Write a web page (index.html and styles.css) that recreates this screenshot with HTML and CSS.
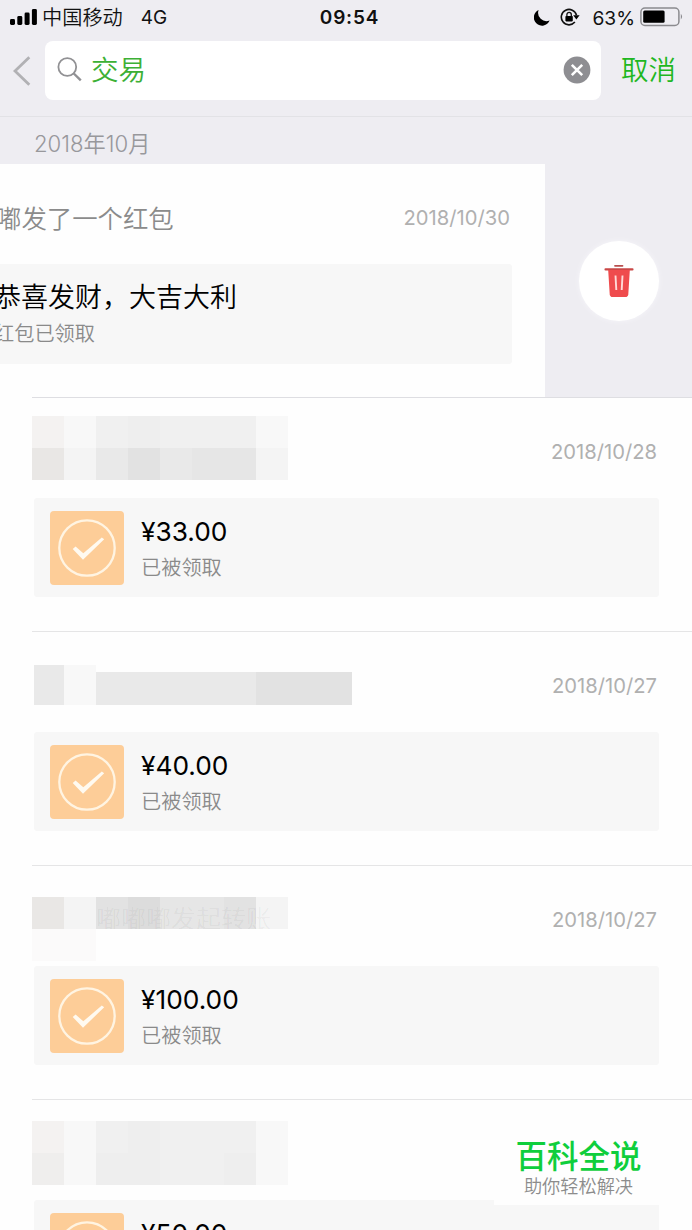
FILE: index.html
```
<!DOCTYPE html>
<html lang="zh-CN">

<head>
    <meta charset="UTF-8">
    <meta name="viewport" content="width=device-width, initial-scale=1.0">
    <title>交易</title>
    <link rel="stylesheet" href="styles.css">
</head>

<body>
    <svg class="defs" width="0" height="0">
        <symbol id="check" viewBox="0 0 74 74">
            <circle cx="37" cy="37" r="27.7" fill="none" stroke="#fff4e2" stroke-width="2.3" />
            <path d="M22.7 38 L25.6 35.5 L33.3 42.3 L51.8 26.5 L54.2 28.2 L33 48.8 Z" fill="#fffaf0" />
        </symbol>
    </svg>

    <div class="phone">
        <header class="top">
            <div class="status-bar">
                <div class="status-left">
                    <svg width="28" height="18" viewBox="0 0 28 18">
                        <rect x="0" y="11" width="5" height="6" rx="1.4" />
                        <rect x="7.3" y="8" width="5" height="9" rx="1.4" />
                        <rect x="14.6" y="4.5" width="5" height="12.5" rx="1.4" />
                        <rect x="21.9" y="1" width="5" height="16" rx="1.4" />
                    </svg>
                    <span class="carrier">中国移动</span>
                    <span class="network">4G</span>
                </div>
                <div class="clock">09:54</div>
                <div class="status-right">
                    <svg width="16" height="17" viewBox="0 0 16 17">
                        <path d="M4.6 1 A8.2 8.2 0 1 0 15.6 11.6 A8.4 8.4 0 0 1 4.6 1 Z" />
                    </svg>
                    <svg class="lock" width="20" height="18" viewBox="0 0 20 18">
                        <path d="M14.9 14.1 A7.7 7.7 0 1 1 16.5 7.3" fill="none" stroke="#111" stroke-width="1.6" />
                        <path d="M13.2 7.3 H19.6 L16.4 11.6 Z" />
                        <rect x="5.4" y="8" width="7.4" height="5.4" rx="0.8" />
                        <path d="M6.9 8.5 V6.6 A2.2 2.2 0 0 1 11.3 6.6 V8.5" fill="none" stroke="#111" stroke-width="1.3" />
                    </svg>
                    <span class="percent">63%</span>
                    <svg width="44" height="20" viewBox="0 0 44 20">
                        <rect x="0.9" y="1" width="38" height="17.4" rx="4" fill="none" stroke="#8b8b8f" stroke-width="1.5" />
                        <rect x="3.2" y="3.6" width="21.4" height="12.2" rx="1.5" />
                        <path d="M40.8 6.8 Q43.4 9.7 40.8 12.6 Z" fill="#8b8b8f" />
                    </svg>
                </div>
            </div>
            <div class="search-bar">
                <svg class="back" width="18" height="30" viewBox="0 0 18 30">
                    <path d="M16.3 1.2 L2 15 L16.3 28.8" fill="none" stroke="#b1b1b4" stroke-width="2.8" />
                </svg>
                <div class="search-box">
                    <svg width="25" height="25" viewBox="0 0 25 25" fill="none" stroke="#919194">
                        <circle cx="10.3" cy="10" r="8.9" stroke-width="1.8" />
                        <path d="M16.8 16.5 L23.8 23.3" stroke-width="2.4" />
                    </svg>
                    <span class="query">交易</span>
                    <svg width="28" height="28" viewBox="0 0 28 28">
                        <circle cx="14" cy="14" r="13.4" fill="#8e8e92" />
                        <path d="M8.8 8.8 L19.2 19.2 M19.2 8.8 L8.8 19.2" stroke="#fff" stroke-width="2.6" />
                    </svg>
                </div>
                <span class="cancel">取消</span>
            </div>
        </header>

        <div class="month">2018年10月</div>

        <div class="swipe-row">
            <div class="swipe-window">
                <div class="item swiped">
                    <div class="item-head">
                        <span class="title">嘟发了一个红包</span>
                        <span class="date">2018/10/30</span>
                    </div>
                    <div class="card">
                        <div class="card-text">
                            <div class="greeting">恭喜发财，大吉大利</div>
                            <div class="state">红包已领取</div>
                        </div>
                    </div>
                </div>
            </div>
            <div class="delete-area">
                <div class="delete-button">
                    <svg width="30" height="34" viewBox="0 0 30 34">
                        <path d="M11 1.8 H18.5" stroke="#b8504f" stroke-width="1.8" stroke-linecap="round" />
                        <path d="M1.5 5.4 H28.5" stroke="#c94847" stroke-width="2.1" stroke-linecap="round" />
                        <path d="M4.2 6 H25.8 L24.3 30.2 Q24.1 33 21.3 33 H8.7 Q5.9 33 5.7 30.2 Z" fill="#ef4b4d" />
                        <path d="M11.5 11.5 L12.3 26 M18.5 11.5 L17.7 26" stroke="#ffd9d7" stroke-width="1.9" />
                    </svg>
                </div>
            </div>
        </div>

        <div class="item">
            <div class="item-head">
                <div class="mosaic m1">
                    <i class="warm"></i><i class="g1"></i><i class="g3"></i><i class="g4"></i><i class="g3"></i><i class="g3"></i><i class="g3"></i><i class="g1"></i>
                    <i class="warm-dark"></i><i class="g2"></i><i class="g5"></i><i class="g7"></i><i class="g5"></i><i class="g6"></i><i class="g6"></i><i class="g2"></i>
                </div>
                <span class="date">2018/10/28</span>
            </div>
            <div class="card">
                <div class="thumb"><svg><use href="#check" /></svg></div>
                <div class="card-text">
                    <div class="amount">¥33.00</div>
                    <div class="state">已被领取</div>
                </div>
            </div>
        </div>

        <div class="item">
            <div class="item-head">
                <div class="mosaic m2">
                    <i class="g5 tall"></i><i class="g1 tall"></i><i class="g5"></i><i class="g5"></i><i class="g5"></i><i class="g5"></i><i class="g5"></i><i class="g7"></i><i class="g7"></i><i class="g7"></i>
                </div>
                <span class="date">2018/10/27</span>
            </div>
            <div class="card">
                <div class="thumb"><svg><use href="#check" /></svg></div>
                <div class="card-text">
                    <div class="amount">¥40.00</div>
                    <div class="state">已被领取</div>
                </div>
            </div>
        </div>

        <div class="item">
            <div class="item-head">
                <div class="mosaic m3">
                    <i class="warm-dark"></i><i class="g2"></i><i class="g7"></i><i class="g8"></i><i class="g6"></i><i class="g6"></i><i class="g7"></i><i class="g2"></i>
                    <i class="g0"></i><i class="g0"></i><i></i><i></i><i></i><i></i><i></i><i></i>
                    <span class="ghost">嘟嘟嘟发起转账</span>
                </div>
                <span class="date">2018/10/27</span>
            </div>
            <div class="card">
                <div class="thumb"><svg><use href="#check" /></svg></div>
                <div class="card-text">
                    <div class="amount">¥100.00</div>
                    <div class="state">已被领取</div>
                </div>
            </div>
        </div>

        <div class="item">
            <div class="item-head">
                <div class="mosaic m4">
                    <i class="warm"></i><i class="g1"></i><i class="g3"></i><i class="g4"></i><i class="g3"></i><i class="g3"></i><i class="g3"></i><i class="g1"></i>
                    <i class="warm-dark"></i><i class="g1"></i><i class="g4"></i><i class="g4"></i><i class="g3"></i><i class="g3"></i><i class="g4"></i><i class="g1"></i>
                </div>
            </div>
            <div class="card">
                <div class="thumb"><svg><use href="#check" /></svg></div>
                <div class="card-text">
                    <div class="amount">¥50.00</div>
                    <div class="state">已被领取</div>
                </div>
            </div>
        </div>

        <div class="watermark">
            <div class="brand">百科全说</div>
            <div class="slogan">助你轻松解决</div>
        </div>
    </div>
</body>

</html>
```
FILE: styles.css
```
* {
    box-sizing: border-box;
}

body {
    margin: 0;
    background: #fff;
    font-family: Inter, "Noto Sans CJK SC", sans-serif;
    font-weight: 350;
    color: #111;
}

svg {
    display: block;
    flex: none;
}

.defs {
    position: absolute;
}

.phone {
    position: relative;
    width: 692px;
    height: 1230px;
    overflow: hidden;
    background: #fefefe;
}

/* status bar and search */
.top {
    height: 117px;
    background: #eeedf2;
    border-bottom: 1px solid #e2e2e6;
}

.status-bar {
    display: grid;
    grid-template-columns: 1fr auto 1fr;
    align-items: center;
    height: 36px;
    padding: 0 8px 2px 10px;
    font-size: 19px;
    line-height: 32px;
}

.status-left,
.status-right {
    display: flex;
    align-items: center;
    height: 34px;
}

.status-right {
    justify-content: flex-end;
}

.carrier {
    margin-left: 4px;
    padding-top: 1px;
    font-size: 20.2px;
}

.network {
    margin-left: 18px;
    padding-top: 1px;
    font-weight: 400;
}

.clock {
    padding: 1px 0 0 5px;
    font-weight: 600;
    font-size: 19px;
    letter-spacing: 0.8px;
}

.lock {
    margin-left: 10px;
}

.percent {
    margin: 0 5px 0 12px;
    padding-top: 1px;
    font-size: 19.2px;
    font-weight: 400;
}

.search-bar {
    display: flex;
    align-items: center;
    height: 69px;
    padding: 0 16px 0 13px;
}

.search-box {
    display: flex;
    align-items: center;
    width: 556px;
    height: 59px;
    margin-left: 14px;
    padding: 0 10px 2px 12px;
    background: #fff;
    border-radius: 8px;
}

.query {
    flex: 1;
    margin-left: 9px;
    font-size: 27.5px;
    line-height: 40px;
    color: #3cb035;
}

.cancel {
    margin-left: auto;
    padding-bottom: 2px;
    font-size: 27.5px;
    line-height: 40px;
    color: #1fb722;
}

.month {
    height: 47px;
    padding: 4px 34px 0;
    background: #eeedf2;
    color: #98989c;
    font-size: 22.2px;
    line-height: 46px;
}

/* list rows */
.item {
    height: 234px;
    padding: 0 33px 0 34px;
    background: linear-gradient(#e5e5e6, #e5e5e6) 32px 100% / 100% 1px no-repeat;
}

.item-head {
    display: flex;
    align-items: flex-start;
    height: 100px;
}

.date {
    margin-left: auto;
    margin-right: 2px;
    padding-top: 39px;
    font-size: 20.2px;
    line-height: 30px;
    font-weight: 400;
    color: #b0b0b0;
}

.title {
    margin-left: 109px;
    padding-top: 36px;
    font-size: 25.4px;
    line-height: 38px;
    color: #8b8b8b;
}

.card {
    display: flex;
    align-items: center;
    height: 99px;
    padding-left: 16px;
    background: #f7f7f7;
    border-radius: 3px;
}

.thumb {
    width: 74px;
    height: 74px;
    margin-right: 17px;
    border-radius: 4px;
    background: #fdcd98;
}

.thumb svg {
    width: 74px;
    height: 74px;
}

.card-text {
    padding-top: 5px;
}

.amount {
    font-size: 26.3px;
    line-height: 36px;
    font-weight: 400;
    color: #000;
}

.greeting {
    font-size: 27px;
    line-height: 36px;
    color: #000;
}

.state {
    font-size: 20.2px;
    line-height: 36px;
    color: #8a8a8a;
}

/* first row is dragged left to reveal the delete button */
.swipe-row {
    display: flex;
    height: 234px;
    padding-bottom: 1px;
    background: linear-gradient(#dedee2, #dedee2) 32px 100% / 100% 1px no-repeat;
}

.swipe-window {
    width: 545px;
    overflow: hidden;
    background: #fefefe;
}

.swiped {
    width: 692px;
    margin-left: -147px;
    background: none;
}

.swiped .card {
    height: 100px;
    padding-left: 107px;
}

.swiped .card-text {
    padding-top: 4px;
}

.delete-area {
    flex: 1;
    display: flex;
    align-items: center;
    justify-content: center;
    background: #eeedf2;
}

.delete-button {
    display: flex;
    align-items: center;
    justify-content: center;
    width: 80px;
    height: 80px;
    border-radius: 50%;
    background: #fff;
    box-shadow: 0 0 5px #f7f6fa;
}

/* mosaic over the names */
.mosaic {
    position: relative;
    display: grid;
    grid-template-columns: repeat(8, 32px);
    grid-auto-rows: 32px;
    margin-left: -2px;
    overflow: hidden;
}

.m1 { margin-top: 18px; }
.m2 { margin-top: 33px; grid-template-columns: 30px repeat(9, 32px); grid-auto-rows: 40px; align-items: end; margin-left: 0; }
.m3 { margin-top: 31px; }
.m4 { margin-top: 21px; }

.m2 i { height: 33px; }
.m2 .tall { height: 40px; }

.warm { background: #f4f2f1; }
.warm-dark { background: #e9e7e5; }
.m4 .warm-dark { background: #efeeed; }
.g0 { background: #fbfafa; }
.g1 { background: #f8f8f8; }
.g2 { background: #f4f4f4; }
.g3 { background: #f0f0f0; }
.g4 { background: #eeeeee; }
.g5 { background: #e9e9e9; }
.g6 { background: #e6e6e6; }
.g7 { background: #e2e2e2; }
.g8 { background: #dcdcdc; }

.ghost {
    position: absolute;
    left: 64px;
    top: 4px;
    font-size: 25px;
    line-height: 36px;
    height: 28px;
    overflow: hidden;
    white-space: nowrap;
    color: rgba(0, 0, 0, 0.05);
}

.watermark {
    position: absolute;
    left: 494px;
    top: 1125px;
    width: 169px;
    height: 80px;
    padding-top: 11px;
    background: #fefefe;
    text-align: center;
}

.brand {
    font-size: 31.5px;
    line-height: 41px;
    font-weight: 500;
    color: #0fce3c;
}

.slogan {
    font-size: 18.2px;
    line-height: 18px;
    color: #8c8c8c;
}
```
